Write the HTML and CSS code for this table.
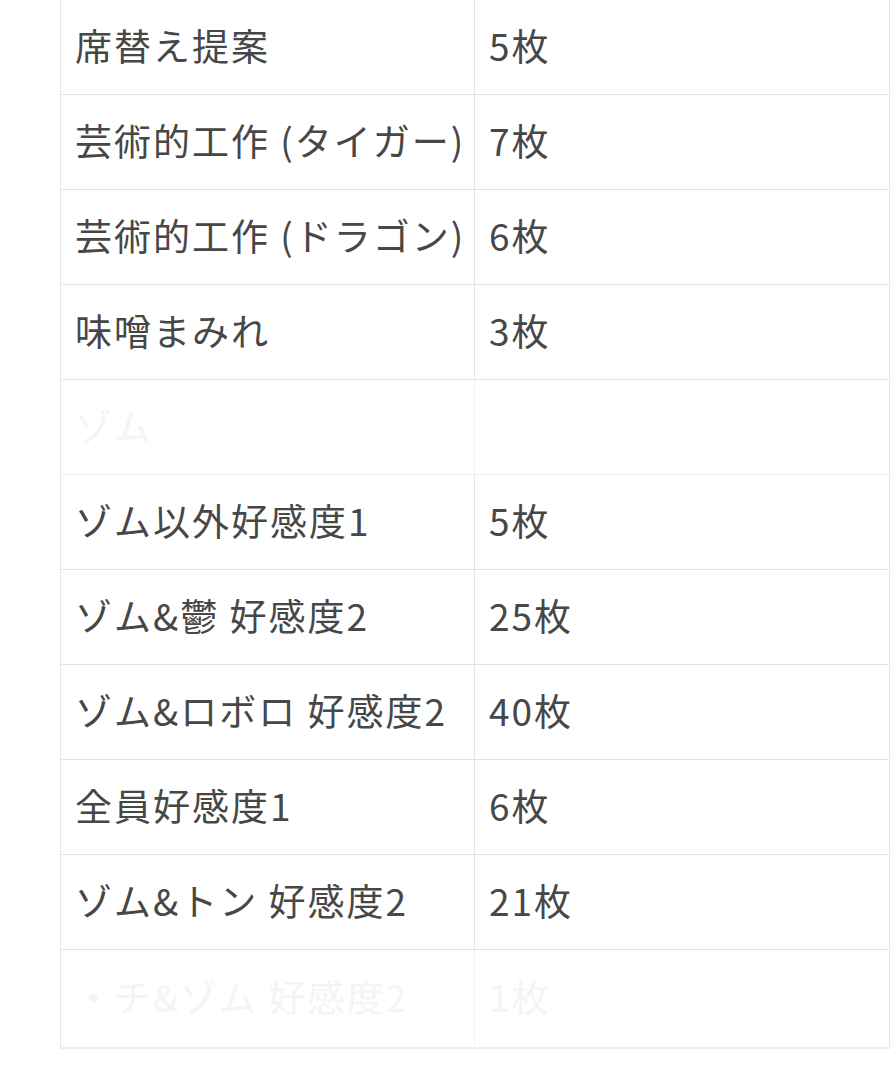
FILE: index.html
```html
<!DOCTYPE html>
<html lang="ja">
<head>
<meta charset="utf-8">
<link rel="stylesheet" href="styles.css">
</head>
<body>
<div class="table">
  <div class="row first"><div class="cell name">席替え提案</div><div class="cell qty">5枚</div></div>
  <div class="row"><div class="cell name">芸術的工作 (タイガー)</div><div class="cell qty">7枚</div></div>
  <div class="row"><div class="cell name">芸術的工作 (ドラゴン)</div><div class="cell qty">6枚</div></div>
  <div class="row"><div class="cell name">味噌まみれ</div><div class="cell qty">3枚</div></div>
  <div class="row faint"><div class="cell name">ゾム</div><div class="cell qty"></div></div>
  <div class="row"><div class="cell name">ゾム以外好感度1</div><div class="cell qty">5枚</div></div>
  <div class="row"><div class="cell name">ゾム&amp;鬱 好感度2</div><div class="cell qty">25枚</div></div>
  <div class="row"><div class="cell name">ゾム&amp;ロボロ 好感度2</div><div class="cell qty">40枚</div></div>
  <div class="row"><div class="cell name">全員好感度1</div><div class="cell qty">6枚</div></div>
  <div class="row"><div class="cell name">ゾム&amp;トン 好感度2</div><div class="cell qty">21枚</div></div>
  <div class="row faint last"><div class="cell name">・チ&amp;ゾム 好感度2</div><div class="cell qty">1枚</div></div>
</div>
</body>
</html>
```

FILE: styles.css
```css
html, body {
  margin: 0;
  padding: 0;
  background: #ffffff;
}

body {
  padding-left: 60px;
  font-family: "Noto Sans CJK JP", "Noto Sans", sans-serif;
  color: #474747;
}

.table {
  width: 828px;
  border-left: 1px solid #e6e6e6;
  border-right: 1px solid #e6e6e6;
}

.row {
  display: grid;
  grid-template-columns: 414px 413px;
  height: 95px;
  box-sizing: border-box;
  border-bottom: 1px solid #e2e2e2;
}

.row.last {
  height: 99px;
  border-bottom: 2px solid #e4e4e4;
}

.cell {
  display: flex;
  align-items: center;
  padding-bottom: 4px;
  box-sizing: border-box;
  font-size: 37px;
  line-height: 1;
  letter-spacing: 2px;
  white-space: nowrap;
}

.name {
  padding-left: 14px;
  border-right: 1px solid #e4e4e4;
}

.qty {
  padding-left: 14px;
}

.row.faint {
  color: #f4f4f4;
  border-bottom-color: #eeeeee;
}

.row.faint .name {
  border-right-color: #f6f6f6;
}
```
